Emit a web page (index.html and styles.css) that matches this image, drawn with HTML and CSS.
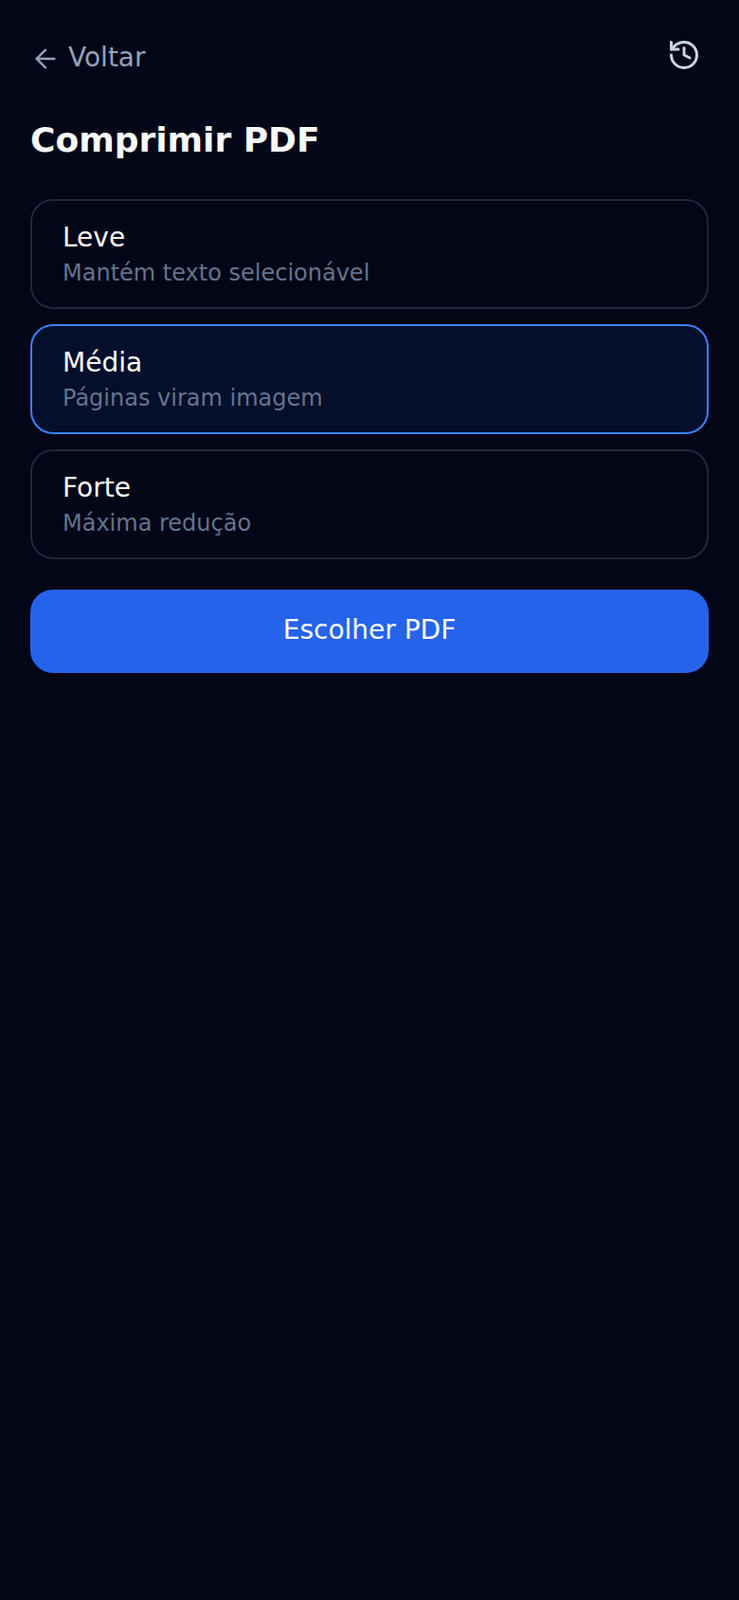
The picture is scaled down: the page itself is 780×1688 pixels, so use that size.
FILE: index.html
```html
<!DOCTYPE html>
<html>
<head>
  <title>Comprimir PDF</title>
  <link rel="stylesheet" href="styles.css">
</head>
<body>
  <div class="top-bar">
    <a class="back-link">
      <svg class="back-icon" viewBox="0 0 24 24" fill="none" stroke="currentColor" stroke-width="1.8" stroke-linecap="round" stroke-linejoin="round">
        <path d="M19 12H5"/>
        <path d="M12 19l-7-7 7-7"/>
      </svg>
      <span>Voltar</span>
    </a>
    <svg class="history-icon" viewBox="0 0 24 24" fill="none" stroke="currentColor" stroke-width="2" stroke-linecap="round" stroke-linejoin="round">
      <path d="M3 12a9 9 0 1 0 9-9 9.75 9.75 0 0 0-6.74 2.74L3 8"/>
      <path d="M3 3v5h5"/>
      <path d="M12 7v5l4 2"/>
    </svg>
  </div>
  <h1>Comprimir PDF</h1>
  <div class="options">
    <div class="option">
      <div class="option-title">Leve</div>
      <div class="option-desc">Mantém texto selecionável</div>
    </div>
    <div class="option selected">
      <div class="option-title">Média</div>
      <div class="option-desc">Páginas viram imagem</div>
    </div>
    <div class="option">
      <div class="option-title">Forte</div>
      <div class="option-desc">Máxima redução</div>
    </div>
  </div>
  <button class="pick-button" type="button">Escolher PDF</button>
</body>
</html>
```

FILE: styles.css
```css
body {
  margin: 0;
  min-height: 1688px;
  padding: 40px 32px 0;
  box-sizing: border-box;
  background-color: #020617;
  font-family: "DejaVu Sans", sans-serif;
  color: #fff;
}
.top-bar {
  display: flex;
  justify-content: space-between;
  align-items: center;
  height: 40px;
}
.back-link {
  display: flex;
  align-items: center;
  gap: 8px;
  font-size: 28px;
  color: #94a3b8;
}
.back-icon {
  width: 32px;
  height: 32px;
  margin-top: 4px;
}
.history-icon {
  width: 36px;
  height: 36px;
  color: #cbd5e1;
  margin: -4px 8px 0 0;
}
h1 {
  margin: 40px 0 34px;
  font-size: 36px;
  line-height: 56px;
  font-weight: 700;
  color: #f8fafc;
}
.options {
  display: flex;
  flex-direction: column;
  gap: 16px;
}
.option {
  height: 116px;
  box-sizing: border-box;
  padding: 21px 32px;
  border: 2px solid #1e293b;
  border-radius: 24px;
}
.option.selected {
  border-color: #3b82f6;
  background-color: #040f2c;
}
.option-title {
  font-size: 28px;
  line-height: 36px;
}
.option-desc {
  margin-top: 1px;
  font-size: 24px;
  line-height: 36px;
  color: #64748b;
}
.pick-button {
  display: block;
  width: 100%;
  height: 88px;
  margin-top: 32px;
  padding-bottom: 5px;
  border: 0;
  border-radius: 24px;
  background-color: #2563eb;
  color: #fff;
  font-family: inherit;
  font-size: 28px;
}
```
